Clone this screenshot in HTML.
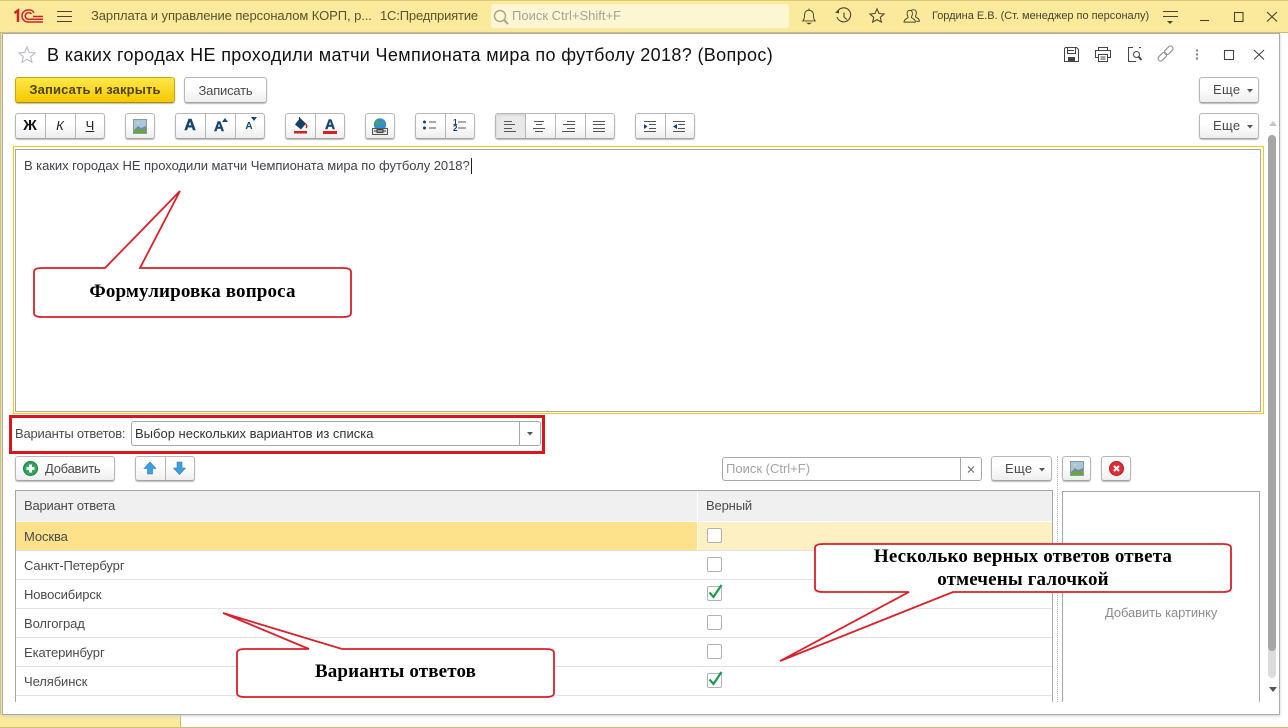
<!DOCTYPE html>
<html lang="ru"><head><meta charset="utf-8"><title>Вопрос</title>
<style>
*{box-sizing:border-box}
html,body{margin:0;padding:0;width:1288px;height:728px;overflow:hidden;background:#fff;font-family:"Liberation Sans",sans-serif;font-size:13px;color:#4a4a4a}
.a{position:absolute}
.t{position:absolute;white-space:nowrap;line-height:14px}
.b{position:absolute;border:1px solid #b8b8b8;border-bottom-color:#a4a4a4;border-radius:3px;background:linear-gradient(#fff 40%,#eee);box-shadow:0 1px 1px #bbb}
.d{position:absolute;top:0;bottom:0;width:1px;background:#b8b8b8}
.c{text-align:center}
.cb{position:absolute;left:707px;width:15px;height:15px;border:1px solid #b2b2b2;border-radius:2px;background:#fff}
.line{position:absolute;left:16px;width:1036px;height:1px;background:#e2e2e2}
.r{letter-spacing:-.1px}
.m{letter-spacing:.3px}
.ser{font-family:"Liberation Serif",serif;font-weight:bold;font-size:19px;color:#000;letter-spacing:.15px}
svg{position:absolute;overflow:visible}
</style></head><body>

<!-- top bar -->
<div class="a" style="left:0;top:0;width:1288px;height:33px;background:#fbe99c;border-top:1px solid #d8c877;border-bottom:1px solid #c9bb74"></div>
<div class="a" style="left:0;top:33px;width:2px;height:695px;background:#fbe99c;border-left:1px solid #cfc070"></div>
<div class="a" style="left:0;top:715px;width:181px;height:13px;background:#fbe99c;border-right:1px solid #c9bb74"></div>
<div class="a" style="left:0;top:727px;width:1288px;height:1px;background:#cfc070"></div>

<svg style="left:14px;top:9px" width="30" height="15" viewBox="0 0 30 15" fill="none" stroke="#d4212a" stroke-width="1.500">
<path d="M.5 4L4 1.500V13" stroke-width="2.500"/>
<path d="M29 13H14A6 6 0 0 1 14 1H15A5 5 0 0 1 20 4"/>
<path d="M29 10.300H14.500A3.300 3.300 0 0 1 14.500 3.700H15.500A3 3 0 0 1 17.500 5"/>
<path d="M19 7.500H29"/>
</svg>
<svg style="left:57px;top:11px" width="15" height="11" stroke="#4a4430" stroke-width="1"><path d="M0 .5H15M0 5.500H15M0 10.500H15"/></svg>
<div class="t" style="left:91px;top:9px;color:#5a5230;letter-spacing:-.08px">Зарплата и управление персоналом КОРП, р...</div>
<div class="t" style="left:380px;top:9px;color:#5a5230;letter-spacing:-.17px">1С:Предприятие</div>
<div class="a" style="left:491px;top:4px;width:298px;height:24px;background:#fdf6d2;border-radius:3px"></div>
<svg style="left:493px;top:9px" width="17" height="17" fill="none" stroke="#a8a590" stroke-width="1.400"><circle cx="7" cy="7" r="5.500"/><path d="M11 11l4 4" stroke-width="2"/></svg>
<div class="t" style="left:512px;top:9px;color:#a5a395">Поиск Ctrl+Shift+F</div>

<!-- top right icons -->
<svg style="left:801px;top:8px" width="16" height="17" viewBox="0 0 18 19" fill="none" stroke="#4a4430" stroke-width="1.100"><path d="M2 14.500C4 12.500 4 10 4 8C4 4.500 6 2.500 9 2.500S14 4.500 14 8C14 10 14 12.500 16 14.500Z"/><path d="M9 .5V2.500"/><path d="M5.500 16.500H12.500L9 18.500Z" fill="#4a4430" stroke="none"/></svg>
<svg style="left:835px;top:8px" width="18" height="17" fill="none" stroke="#4a4430" stroke-width="1.100"><path d="M2.500 3.500A7 7 0 1 1 2 9"/><path d="M0 4.500L4 1.500V5.500Z" fill="#4a4430" stroke="none"/><path d="M9 4.500V9L12 11.500"/></svg>
<svg style="left:869px;top:8px" width="16" height="15" viewBox="0 0 18 17" fill="none" stroke="#4a4430" stroke-width="1.200"><path d="M9 1L11.300 6.300L17 6.800L12.700 10.600L14 16L9 13.200L4 16L5.300 10.600L1 6.800L6.700 6.300Z"/></svg>
<svg style="left:903px;top:9px" width="17" height="14" viewBox="0 0 19 16" fill="none" stroke="#4a4430" stroke-width="1.100"><path d="M1 15C1 11.500 4 11 5.500 10C6 9 5 8 4.500 6.500C4 3 5.500 1.500 7.500 1.500S11 3 10.500 6.500C10 8 9 9 9.500 10C11 11 14 11.500 14 15Z"/><path d="M9 1.800C9.800 1 11 .8 12 .8C14 .8 15.500 2.500 15 5.500C14.600 7 13.800 8 14 9C15.500 10 18.500 10.500 18.500 14H15"/></svg>
<div class="t" style="left:932px;top:9px;font-size:11px;color:#4a4430;letter-spacing:-.02px">Гордина Е.В. (Ст. менеджер по персоналу)</div>
<svg style="left:1163px;top:11px" width="16" height="13" stroke="#4a4430"><path d="M0 .5H15M0 5.500H15"/><path d="M4 10H10L7 13Z" fill="#4a4430" stroke="none"/></svg>
<svg style="left:1200px;top:10px" width="80" height="13" fill="none" stroke="#4a4430" stroke-width="1.100"><path d="M0 10.500H9"/><rect x="34.500" y="2.500" width="8.500" height="9"/><path d="M67 2L77 11.500M77 2L67 11.500"/></svg>

<!-- window -->
<div class="a" style="left:2px;top:33px;width:1278px;height:682px;background:#fff;border:1px solid #ababab;box-shadow:0 1px 3px #ccc"></div>

<svg style="left:18px;top:46px" width="18" height="17" fill="#fff" stroke="#b9bcc4" stroke-width="1.100"><path d="M9 1L11.300 6.400L17 6.900L12.700 10.700L14 16.300L9 13.300L4 16.300L5.300 10.700L1 6.900L6.700 6.400Z"/></svg>
<div class="t" style="left:47px;top:45px;font-size:18px;line-height:21px;color:#111;letter-spacing:.35px">В каких городах НЕ проходили матчи Чемпионата мира по футболу 2018? (Вопрос)</div>

<svg style="left:1064px;top:47px" width="15" height="15" fill="none" stroke="#444"><path d="M1.500 .5H12.500L14.500 2.500V14.500H.5V1.500Z"/><path d="M3.500 1V6.500H11.500V1M3.500 3.500H10"/><rect x="4" y="10" width="7" height="4.500" fill="#444" stroke="none"/></svg>
<svg style="left:1095px;top:46px" width="16" height="16" fill="none" stroke="#444"><path d="M3.500 4.500V1.500H12.500V4.500M3.500 11.500H.5V4.500H15.500V11.500H12.500"/><rect x="3.500" y="8.500" width="9" height="7"/><path d="M5.500 11H10.500M5.500 13H10.500"/></svg>
<svg style="left:1127px;top:47px" width="16" height="15" fill="none" stroke="#444"><path d="M6 .5H1.500V14.500H9M12 .5H14"/><circle cx="9.500" cy="7.500" r="3"/><path d="M11.800 10L14.500 13" stroke-width="2"/></svg>
<svg style="left:1158px;top:46px" width="15" height="15" fill="none" stroke="#8d8d8d" stroke-width="1.100"><g transform="rotate(-45 7.500 7.500)"><rect x="-2" y="5" width="10" height="5" rx="2.500"/><rect x="7" y="5" width="10" height="5" rx="2.500"/></g></svg>
<svg style="left:1195px;top:49px" width="4" height="12" fill="#888"><circle cx="2" cy="1.500" r="1.200"/><circle cx="2" cy="5.500" r="1.200"/><circle cx="2" cy="9.500" r="1.200"/></svg>
<svg style="left:1224px;top:49px" width="46" height="12" fill="none" stroke="#444" stroke-width="1.100"><rect x=".5" y="1.500" width="9" height="9"/><path d="M30 1L40 10.500M40 1L30 10.500"/></svg>

<!-- command bar -->
<div class="b" style="left:15px;top:77px;width:160px;height:26px;background:linear-gradient(#ffe84a,#f4c800);border-color:#c9a800 #c9a800 #a88c00"></div>
<div class="t c" style="left:15px;top:83px;width:160px;font-weight:bold;color:#4f4312;letter-spacing:.13px">Записать и закрыть</div>
<div class="b c" style="left:184px;top:77px;width:83px;height:26px;line-height:25px;letter-spacing:-.2px">Записать</div>
<div class="b" style="left:1199px;top:77px;width:60px;height:26px"></div>
<div class="t m" style="left:1213px;top:83px">Еще</div>
<svg style="left:1247px;top:89px" width="6" height="4"><path d="M0 0H6L3 3.500Z" fill="#555"/></svg>

<!-- format bar -->
<div class="b" style="left:15px;top:113px;width:90px;height:26px"><div class="d" style="left:29px"></div><div class="d" style="left:59px"></div></div>
<div class="t c" style="left:15px;top:119px;width:30px;font-weight:bold;font-size:15px;color:#111">Ж</div>
<div class="t c" style="left:45px;top:119px;width:30px;font-style:italic;font-size:13px;color:#222">К</div>
<div class="t c" style="left:75px;top:119px;width:30px;font-size:13px;color:#222;text-decoration:underline">Ч</div>

<div class="b" style="left:125px;top:113px;width:30px;height:26px"></div>
<svg style="left:133px;top:119px" width="14" height="15"><rect width="14" height="15" fill="#a9c6de"/><rect x=".5" y=".5" width="13" height="14" fill="none" stroke="#8a9aa5"/><path d="M1 11L5 7L8 9L13 7V11Z" fill="#7a8a90"/><rect x="1" y="11" width="12" height="3" fill="#5fae32"/><circle cx="5" cy="4" r="1" fill="#f5e35a"/></svg>

<div class="b" style="left:175px;top:113px;width:90px;height:26px"><div class="d" style="left:29px"></div><div class="d" style="left:59px"></div></div>
<div class="t c" style="left:175px;top:118px;width:30px;font-weight:bold;font-size:16px;line-height:16px;color:#17466e;-webkit-text-stroke:.5px #17466e">A</div>
<div class="t c" style="left:204px;top:119px;width:30px;font-weight:bold;font-size:14px;color:#17466e;-webkit-text-stroke:.4px #17466e">A</div>
<svg style="left:222px;top:118px" width="6" height="4"><path d="M0 4H6L3 0Z" fill="#17466e"/></svg>
<div class="t c" style="left:234px;top:120px;width:30px;font-weight:bold;font-size:10px;color:#17466e">A</div>
<svg style="left:251px;top:117px" width="6" height="4"><path d="M0 0H6L3 4Z" fill="#17466e"/></svg>

<div class="b" style="left:285px;top:113px;width:60px;height:26px"><div class="d" style="left:29px"></div></div>
<svg style="left:293px;top:117px" width="15" height="18"><path d="M7 1L13 6.500L8 12.500L2 7.500Z" fill="#14406a"/><path d="M6.500 0V5" stroke="#14406a"/><path d="M13 7C14 9 14 10 13 11" stroke="#d62020" fill="none" stroke-width="1.500"/><rect x="1" y="14" width="13" height="2.500" fill="#d81e1e"/></svg>
<div class="t c" style="left:315px;top:117px;width:30px;font-weight:bold;font-size:14px;color:#17466e;-webkit-text-stroke:.4px #17466e">A</div>
<div class="a" style="left:323px;top:131px;width:14px;height:2.500px;background:#d81e1e"></div>

<div class="b" style="left:365px;top:113px;width:30px;height:26px"></div>
<svg style="left:372px;top:118px" width="16" height="18"><circle cx="8" cy="6.500" r="6.200" fill="#2f8fd8"/><path d="M4 2C7 2 9 4 7 6C6 8 4 8 3 6Z" fill="#4aa64a"/><path d="M10 2L13 5L11 7Z" fill="#4aa64a"/><rect x=".5" y="10.500" width="15" height="6" fill="#e8e8e8" stroke="#555"/><rect x="5" y="11.500" width="6" height="3" fill="#fff" stroke="#444"/><path d="M2 13H14" stroke="#333"/></svg>

<div class="b" style="left:415px;top:113px;width:60px;height:26px"><div class="d" style="left:29px"></div></div>
<svg style="left:423px;top:120px" width="14" height="10" fill="#14406a"><circle cx="1.500" cy="2" r="1.500"/><circle cx="1.500" cy="8" r="1.500"/><path d="M6 1.500H13V2.500H6ZM6 7.500H13V8.500H6Z" fill="#555"/></svg>
<div class="t" style="left:453px;top:120px;font-size:8px;line-height:6px;font-weight:bold;color:#14406a;white-space:pre">1
2</div>
<svg style="left:458px;top:120px" width="9" height="10" fill="#555"><rect width="8" height="1" y="1.500"/><rect width="8" height="1" y="7.500"/></svg>

<div class="b" style="left:495px;top:113px;width:120px;height:26px"><div class="a" style="left:0;top:0;width:30px;height:24px;background:#e9e9e9;box-shadow:inset 0 1px 2px #ccc"></div><div class="d" style="left:29px"></div><div class="d" style="left:59px"></div><div class="d" style="left:89px"></div></div>
<svg style="left:504px;top:121px" width="105" height="12" stroke="#555"><path d="M0 .5H8M0 3.500H11M0 7.500H8M0 10.500H12"/><path d="M30 .5H40M32 3.500H38M29 7.500H41M31 10.500H39"/><path d="M63 .5H71M59 3.500H71M63 7.500H71M58 10.500H71"/><path d="M89 .5H101M89 3.500H101M89 7.500H101M89 10.500H101"/></svg>

<div class="b" style="left:635px;top:113px;width:60px;height:26px"><div class="d" style="left:29px"></div></div>
<svg style="left:644px;top:121px" width="45" height="12" stroke="#555"><path d="M0 .5H12M5 3.500H12M5 7.500H12M0 10.500H12"/><path d="M0 3L3.500 5.500L0 8Z" fill="#14406a" stroke="none"/><path d="M29 .5H41M34 3.500H41M34 7.500H41M29 10.500H41"/><path d="M33 3L29 5.500L33 8Z" fill="#14406a" stroke="none"/></svg>

<div class="b" style="left:1199px;top:113px;width:60px;height:26px"></div>
<div class="t m" style="left:1213px;top:119px">Еще</div>
<svg style="left:1247px;top:125px" width="6" height="4"><path d="M0 0H6L3 3.500Z" fill="#555"/></svg>

<!-- scrollbar -->
<svg style="left:1269px;top:121px" width="8" height="6"><path d="M0 5H8L4 0Z" fill="#c4c4c4"/></svg>
<div class="a" style="left:1268px;top:135px;width:8px;height:543px;background:#dcdcdc;border-radius:4px"></div>
<div class="a" style="left:1268px;top:135px;width:8px;height:516px;background:#a6a6a6;border-radius:4px"></div>
<svg style="left:1269px;top:687px" width="8" height="6"><path d="M0 0H8L4 5Z" fill="#555"/></svg>

<!-- editor -->
<div class="a" style="left:13px;top:146px;width:1251px;height:268px;border:1px solid #f7c900"></div>
<div class="a" style="left:15px;top:149px;width:1246px;height:263px;border:1px solid #a8a8a8"></div>
<div class="t" style="left:24px;top:159px;color:#45414d;letter-spacing:-.05px">В каких городах НЕ проходили матчи Чемпионата мира по футболу 2018?</div>
<div class="a" style="left:471px;top:158px;width:1px;height:16px;background:#222"></div>

<!-- answer type -->
<div class="a" style="left:9px;top:415px;width:536px;height:39px;border:3px solid #d9151f"></div>
<div class="t" style="left:15px;top:427px;letter-spacing:-.2px">Варианты ответов:</div>
<div class="a" style="left:131px;top:421px;width:410px;height:25px;border:1px solid #a8a8a8;border-radius:3px;background:#fff"></div>
<div class="a" style="left:519px;top:422px;width:1px;height:23px;background:#a8a8a8"></div>
<div class="t" style="left:135px;top:427px;color:#333">Выбор нескольких вариантов из списка</div>
<svg style="left:527px;top:432px" width="6" height="4"><path d="M0 0H6L3 3.500Z" fill="#555"/></svg>

<!-- table toolbar -->
<div class="b" style="left:15px;top:456px;width:100px;height:25px"></div>
<svg style="left:23px;top:461px" width="15" height="15"><circle cx="7.500" cy="7.500" r="7" fill="#2ea55a" stroke="#1c7f40"/><path d="M6 3.500H9V6H11.500V9H9V11.500H6V9H3.500V6H6Z" fill="#fff"/></svg>
<div class="t" style="left:45px;top:462px;letter-spacing:-.25px">Добавить</div>
<div class="b" style="left:135px;top:456px;width:60px;height:25px"><div class="d" style="left:29px"></div></div>
<svg style="left:144px;top:461px" width="42" height="15" fill="#3d9fdf" stroke="#2c7fb8" stroke-width=".6"><path d="M6 1L12 7.500H8.500V13H3.500V7.500H0Z"/><path d="M33 1H38V7H41.500L35.500 13.500L29.500 7H33Z"/></svg>

<div class="a" style="left:722px;top:457px;width:260px;height:24px;border:1px solid #a8a8a8;border-radius:3px;background:#fff"></div>
<div class="a" style="left:960px;top:458px;width:1px;height:22px;background:#a8a8a8"></div>
<div class="t" style="left:726px;top:462px;color:#a3a3a3">Поиск (Ctrl+F)</div>
<svg style="left:967px;top:466px" width="8" height="7" stroke="#666"><path d="M1 .5L7 6.500M7 .5L1 6.500"/></svg>
<div class="b" style="left:991px;top:456px;width:61px;height:25px"></div>
<div class="t m" style="left:1005px;top:462px">Еще</div>
<svg style="left:1039px;top:468px" width="6" height="4"><path d="M0 0H6L3 3.500Z" fill="#555"/></svg>
<div class="a" style="left:1057px;top:456px;width:0;height:246px;border-left:1px dotted #bbb"></div>
<div class="b" style="left:1062px;top:456px;width:29px;height:25px"></div>
<svg style="left:1070px;top:461px" width="14" height="15"><rect width="14" height="15" fill="#a9c6de"/><rect x=".5" y=".5" width="13" height="14" fill="none" stroke="#8a9aa5"/><path d="M1 11L5 7L8 9L13 7V11Z" fill="#7a8a90"/><rect x="1" y="11" width="12" height="3" fill="#5fae32"/><circle cx="5" cy="4" r="1" fill="#f5e35a"/></svg>
<div class="b" style="left:1101px;top:456px;width:30px;height:25px"></div>
<svg style="left:1109px;top:461px" width="15" height="15"><circle cx="7.500" cy="7.500" r="7" fill="#df2d35" stroke="#b51e26"/><path d="M5 5L10 10M10 5L5 10" stroke="#fff" stroke-width="2"/></svg>

<!-- table -->
<div class="a" style="left:15px;top:490px;width:1038px;height:212px;border-left:1px solid #a8a8a8;border-right:1px solid #a8a8a8;border-top:1px solid #a8a8a8"></div>
<div class="a" style="left:16px;top:491px;width:1036px;height:30px;background:#f0f0f0"></div>
<div class="a" style="left:697px;top:491px;width:1px;height:30px;background:#fff"></div>
<div class="t" style="left:24px;top:499px;letter-spacing:-.2px">Вариант ответа</div>
<div class="t" style="left:706px;top:499px;letter-spacing:-.15px">Верный</div>
<div class="a" style="left:16px;top:522px;width:681px;height:28px;background:#fee28b"></div>
<div class="a" style="left:698px;top:522px;width:354px;height:28px;background:#fdf0c3"></div>
<div class="line" style="top:550px"></div><div class="line" style="top:579px"></div><div class="line" style="top:608px"></div><div class="line" style="top:637px"></div><div class="line" style="top:666px"></div><div class="line" style="top:695px"></div>
<div class="t r" style="left:24px;top:530px">Москва</div>
<div class="t r" style="left:24px;top:559px">Санкт-Петербург</div>
<div class="t r" style="left:24px;top:588px">Новосибирск</div>
<div class="t r" style="left:24px;top:617px">Волгоград</div>
<div class="t r" style="left:24px;top:646px">Екатеринбург</div>
<div class="t r" style="left:24px;top:675px">Челябинск</div>
<div class="cb" style="top:528px"></div><div class="cb" style="top:557px"></div><div class="cb" style="top:586px"></div><div class="cb" style="top:615px"></div><div class="cb" style="top:644px"></div><div class="cb" style="top:673px"></div>
<svg style="left:708px;top:584px" width="15" height="15" fill="none" stroke="#1a9c50" stroke-width="2.200"><path d="M1.500 8.500L5.500 13L13.500 1"/></svg>
<svg style="left:708px;top:671px" width="15" height="15" fill="none" stroke="#1a9c50" stroke-width="2.200"><path d="M1.500 8.500L5.500 13L13.500 1"/></svg>

<!-- picture -->
<div class="a" style="left:1062px;top:491px;width:198px;height:211px;border:1px solid #a8a8a8;border-bottom:0"></div>
<div class="t" style="left:1105px;top:606px;color:#8c8c8c;letter-spacing:-.1px">Добавить картинку</div>

<!-- callouts -->
<svg style="left:0;top:0" width="1288" height="728" fill="#fff" stroke="#d9202a" stroke-width="1.800">
<path d="M105 268L180 191L140 268H343Q351 268 351 272V313Q351 317 343 317H42Q34 317 34 313V272Q34 268 42 268Z"/>
<path d="M823 544H1223Q1231 544 1231 548V588Q1231 592 1223 592H953L780 661L909 592H823Q815 592 815 588V548Q815 544 823 544Z"/>
<path d="M245 649H309L223 613L342 649H546Q554 649 554 653V693Q554 697 546 697H245Q237 697 237 693V653Q237 649 245 649Z"/>
</svg>
<div class="t c ser" style="left:34px;top:283px;width:317px;line-height:18px">Формулировка вопроса</div>
<div class="t c ser" style="left:815px;top:545px;width:416px;line-height:23px;white-space:normal">Несколько верных ответов ответа<br>отмечены галочкой</div>
<div class="t c ser" style="left:237px;top:663px;width:317px;line-height:18px">Варианты ответов</div>

</body></html>
